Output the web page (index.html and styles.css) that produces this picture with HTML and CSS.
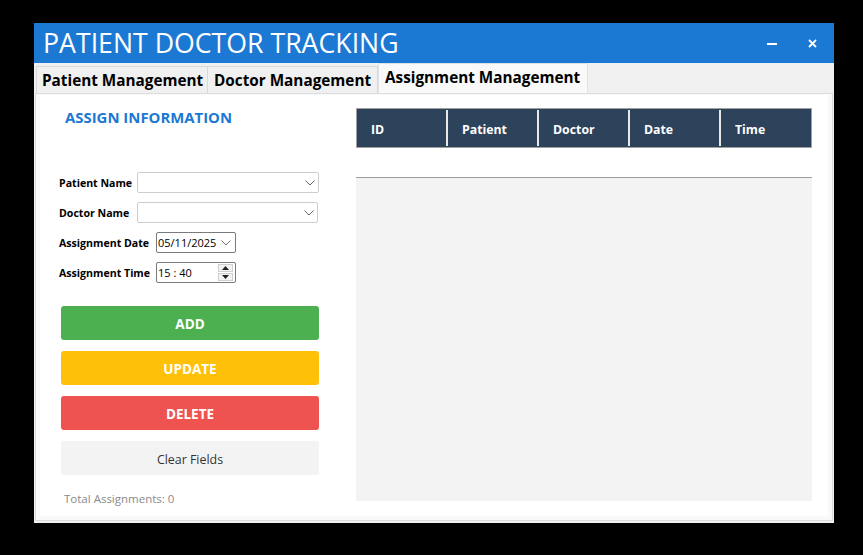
FILE: index.html
```html
<!DOCTYPE html>
<html>
<head>
<meta charset="utf-8">
<link rel="stylesheet" href="styles.css">
</head>
<body>
<div class="window">
  <div class="titlebar">
    <div class="title">PATIENT DOCTOR TRACKING</div>
    <div class="controls">
      <span class="ctl min"></span>
      <span class="ctl close">
        <svg width="9" height="9" viewBox="0 0 9 9"><path d="M1 1L8 8M8 1L1 8" stroke="#fff" stroke-width="1.8"/></svg>
      </span>
    </div>
  </div>
  <div class="tabs">
    <div class="tab t1">Patient Management</div>
    <div class="tab t2">Doctor Management</div>
    <div class="tab t3 active">Assignment Management</div>
  </div>
  <div class="tabframe">
    <div class="page">
      <div class="leftcol">
        <div class="heading">ASSIGN INFORMATION</div>
        <div class="form">
          <div class="row">
            <label class="lbl lbl-name">Patient Name</label>
            <div class="combo"><svg class="chev" width="10" height="6" viewBox="0 0 10 6"><path d="M0.5 0.5L5 5L9.5 0.5" fill="none" stroke="#666" stroke-width="1"/></svg></div>
          </div>
          <div class="row">
            <label class="lbl lbl-name">Doctor Name</label>
            <div class="combo combo2"><svg class="chev" width="10" height="6" viewBox="0 0 10 6"><path d="M0.5 0.5L5 5L9.5 0.5" fill="none" stroke="#666" stroke-width="1"/></svg></div>
          </div>
          <div class="row">
            <label class="lbl lbl-date">Assignment Date</label>
            <div class="picker"><span class="val">05/11/2025</span><svg class="chev" width="10" height="6" viewBox="0 0 10 6"><path d="M0.5 0.5L5 5L9.5 0.5" fill="none" stroke="#777" stroke-width="1"/></svg></div>
          </div>
          <div class="row">
            <label class="lbl lbl-date">Assignment Time</label>
            <div class="picker"><span class="val">15 : 40</span>
              <div class="spin">
                <span class="sb"><svg width="7" height="4" viewBox="0 0 7 4"><path d="M0 4L3.5 0L7 4Z" fill="#222"/></svg></span>
                <span class="sb"><svg width="7" height="4" viewBox="0 0 7 4"><path d="M0 0L3.5 4L7 0Z" fill="#222"/></svg></span>
              </div>
            </div>
          </div>
        </div>
        <div class="buttons">
          <div class="btn add">ADD</div>
          <div class="btn update">UPDATE</div>
          <div class="btn delete">DELETE</div>
          <div class="btn clear">Clear Fields</div>
        </div>
        <div class="total">Total Assignments: 0</div>
      </div>
      <div class="rightcol">
        <div class="grid">
          <div class="ghead">
            <div class="gc">ID</div>
            <div class="gc">Patient</div>
            <div class="gc">Doctor</div>
            <div class="gc">Date</div>
            <div class="gc">Time</div>
          </div>
          <div class="grow"></div>
          <div class="gempty"></div>
        </div>
      </div>
    </div>
  </div>
</div>
</body>
</html>
```
FILE: styles.css
```css
* { box-sizing: border-box; }
html, body { margin: 0; padding: 0; }
body {
  background: #000;
  width: 863px;
  height: 555px;
  padding: 23px 0 0 34px;
  font-family: "Open Sans", "Noto Sans", sans-serif;
}
.window {
  width: 800px;
  height: 500px;
  background: #f0f0f0;
  display: flex;
  flex-direction: column;
}
.titlebar {
  height: 40px;
  background: #1b78d3;
  display: flex;
  align-items: center;
  justify-content: space-between;
  color: #fff;
}
.title {
  font-size: 26.7px;
  padding-left: 9px;
  line-height: 40px;
}
.controls {
  display: flex;
  align-items: center;
  padding-right: 17px;
}
.ctl { display: flex; align-items: center; justify-content: center; }
.min {
  width: 10px;
  height: 2px;
  background: #fff;
  margin-right: 31px;
  margin-top: 2px;
}
.close { width: 9px; height: 9px; }
.tabs {
  height: 30px;
  display: flex;
  align-items: flex-end;
  padding-left: 2px;
}
.tab {
  height: 27px;
  border: 1px solid #d9d9d9;
  border-bottom: none;
  background: #f0f0f0;
  font-weight: 700;
  font-size: 15.3px;
  color: #000;
  display: flex;
  align-items: center;
  padding: 0 5px;
  white-space: nowrap;
}
.t1 { width: 172px; }
.t2 { width: 170px; border-left: none; padding-left: 6px; }
.t3 { width: 210px; }
.tab.active {
  height: 30px;
  background: #f9f9f9;
  border-color: #e2e2e2;
  padding-bottom: 3px;
  padding-left: 6px;
}
.tabframe {
  flex: 1;
  margin: 0 1px 2px 1px;
  border: 1px solid #dcdcdc;
  background: #f9f9f9;
  padding: 1px 4px 4px 4px;
}
.page {
  height: 100%;
  background: #fff;
  display: flex;
}
.leftcol {
  width: 279px;
  padding-left: 19px;
  display: flex;
  flex-direction: column;
}
.heading {
  margin-top: 12px;
  padding-left: 6px;
  font-size: 14.9px;
  font-weight: 700;
  color: #1b78d3;
  line-height: 20px;
}
.form {
  margin-top: 45px;
  display: flex;
  flex-direction: column;
  gap: 9px;
}
.row {
  display: flex;
  align-items: center;
  height: 21px;
}
.lbl {
  font-size: 10.6px;
  font-weight: 700;
  color: #000;
  white-space: nowrap;
}
.lbl-name { width: 78px; }
.lbl-date { width: 97px; }
.combo {
  width: 182px;
  height: 21px;
  border: 1px solid #cdcdcd;
  border-radius: 2px;
  background: #fff;
  display: flex;
  align-items: center;
  justify-content: flex-end;
  padding-right: 3px;
}
.combo2 { width: 181px; }
.picker {
  width: 80px;
  height: 21px;
  border: 1px solid #7a7a7a;
  border-radius: 2px;
  background: #fff;
  display: flex;
  align-items: center;
  justify-content: space-between;
  padding: 0 4px 0 1px;
}
.val { font-size: 11px; color: #000; }
.spin {
  display: flex;
  flex-direction: column;
  gap: 1px;
  margin-right: -2px;
}
.sb {
  width: 15px;
  height: 8px;
  border: 1px solid #cfcfcf;
  background: #f3f3f3;
  display: flex;
  align-items: center;
  justify-content: center;
}
.buttons {
  margin-top: 23px;
  margin-left: 2px;
  display: flex;
  flex-direction: column;
  gap: 11px;
}
.btn {
  width: 258px;
  height: 34px;
  border-radius: 3px;
  display: flex;
  align-items: center;
  justify-content: center;
  color: #fff;
  font-weight: 700;
  font-size: 13.5px;
  padding-top: 2px;
}
.add { background: #4caf50; }
.update { background: #ffc107; }
.delete { background: #ef5350; }
.clear { background: #f3f3f3; color: #333; font-weight: 400; font-size: 12.4px; }
.total {
  margin-top: 16px;
  padding-left: 5px;
  font-size: 11.5px;
  color: #8a8a8a;
}
.rightcol {
  margin-left: 37px;
  padding-top: 13px;
}
.grid {
  width: 456px;
  height: 393px;
  display: flex;
  flex-direction: column;
  background: #f3f3f3;
}
.ghead {
  height: 40px;
  border: 1px solid #a0a0a0;
  background: #2d425b;
  display: flex;
  align-items: stretch;
  padding: 1px 0;
}
.gc {
  width: 91px;
  color: #fff;
  font-weight: 700;
  font-size: 12.3px;
  display: flex;
  align-items: center;
  padding-left: 14px;
  padding-top: 2px;
  border-right: 2px solid #e8e8e8;
}
.gc:last-child { border-right: none; flex: 1; }
.grow {
  height: 30px;
  background: #fff;
  border-bottom: 1px solid #a0a0a0;
}
.gempty { flex: 1; }
```
